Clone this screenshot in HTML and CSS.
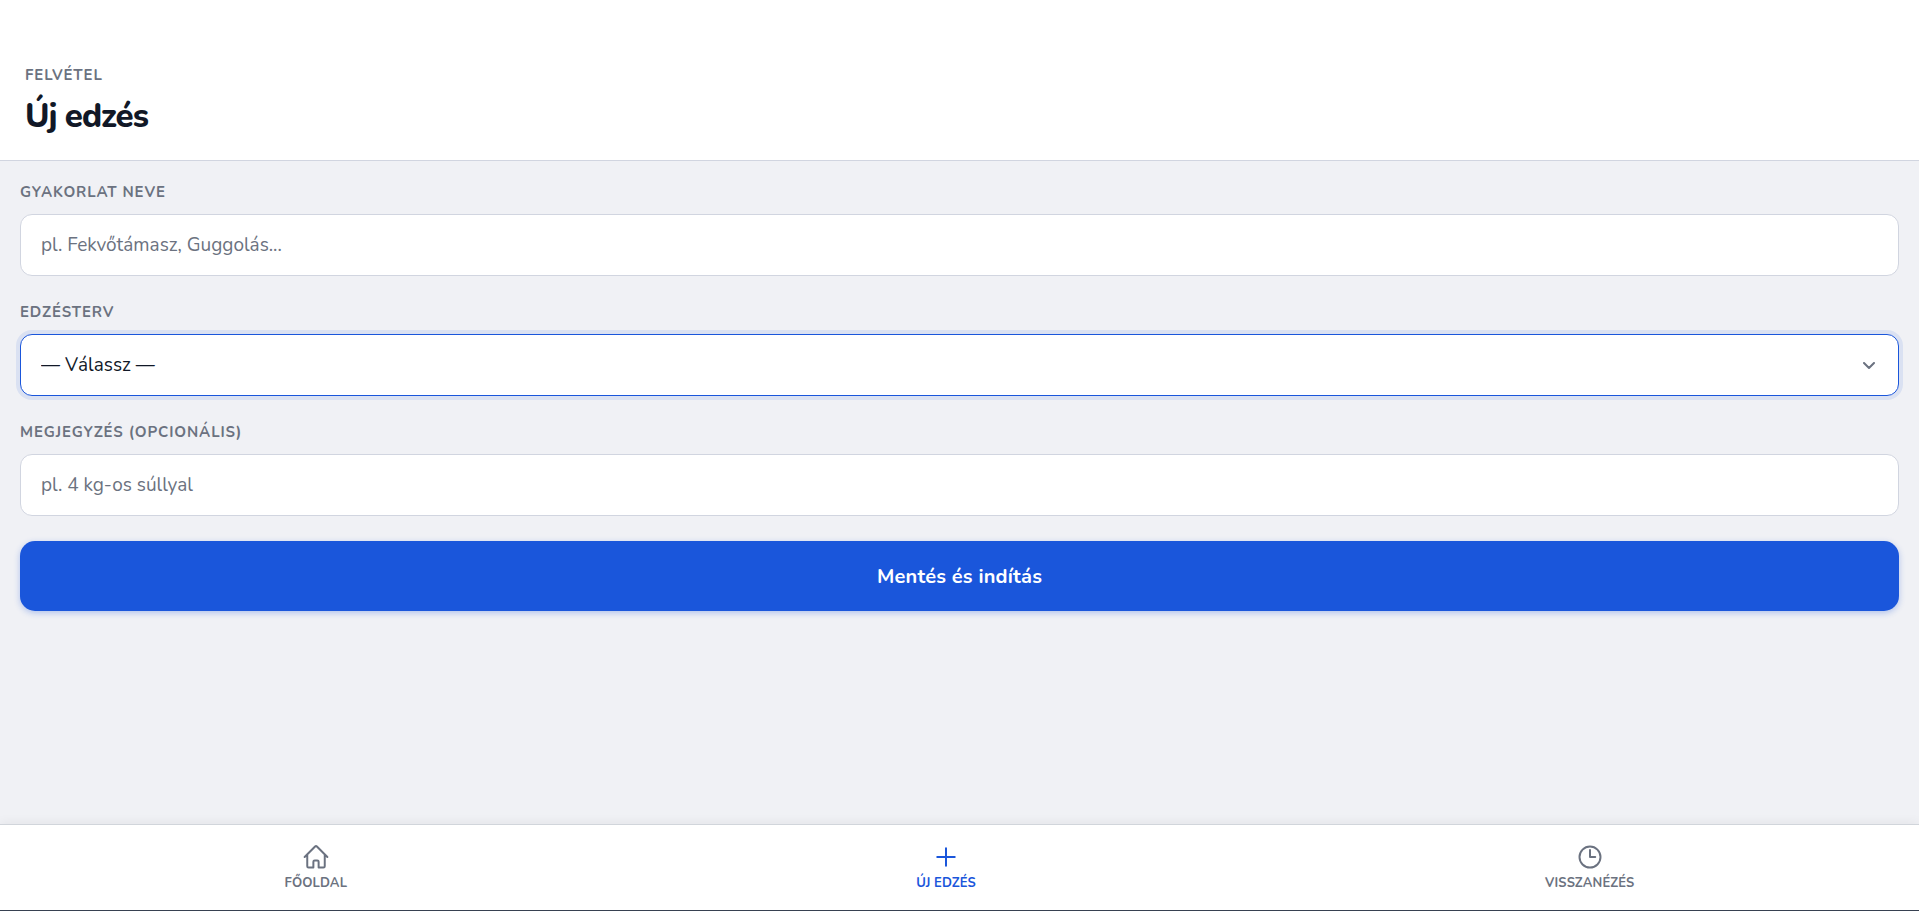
FILE: index.html
```html
<!DOCTYPE html>
<html lang="hu">
  <head>
    <meta charset="UTF-8" />
    <meta name="viewport" content="width=device-width, initial-scale=1.0" />
    <title>Új edzés</title>
    <link rel="stylesheet" href="styles.css" />
  </head>
  <body>
    <header class="page-header">
      <p class="eyebrow">Felvétel</p>
      <h1>Új edzés</h1>
    </header>

    <main class="content">
      <form class="form">
        <div class="field">
          <label for="exercise">Gyakorlat neve</label>
          <input type="text" id="exercise" name="exercise" placeholder="pl. Fekvőtámasz, Guggolás..." />
        </div>
        <div class="field">
          <label for="plan">Edzésterv</label>
          <div class="select-wrap active">
            <select id="plan" name="plan">
              <option value="">— Válassz —</option>
            </select>
            <svg class="chevron" viewBox="0 0 12 8"><path d="M1 1l5 5 5-5" /></svg>
          </div>
        </div>
        <div class="field">
          <label for="note">Megjegyzés (opcionális)</label>
          <input type="text" id="note" name="note" placeholder="pl. 4 kg-os súllyal" />
        </div>
        <button type="submit" class="btn">Mentés és indítás</button>
      </form>
    </main>

    <nav class="tabbar">
      <a href="#" class="tab">
        <svg viewBox="0 0 24 24"><path d="M2.25 12l8.954-8.955c.44-.439 1.152-.439 1.591 0L21.75 12M4.5 9.75v10.125c0 .621.504 1.125 1.125 1.125H9.75v-4.875c0-.621.504-1.125 1.125-1.125h2.25c.621 0 1.125.504 1.125 1.125V21h4.125c.621 0 1.125-.504 1.125-1.125V9.75" /></svg>
        <span>Főoldal</span>
      </a>
      <a href="#" class="tab active">
        <svg viewBox="0 0 24 24"><path d="M12 4.5v15m7.5-7.5h-15" /></svg>
        <span>Új edzés</span>
      </a>
      <a href="#" class="tab">
        <svg viewBox="0 0 24 24"><path d="M12 6v6h4.5m4.5 0a9 9 0 11-18 0 9 9 0 0118 0z" /></svg>
        <span>Visszanézés</span>
      </a>
    </nav>
  </body>
</html>
```
FILE: styles.css
```css
* {
  margin: 0;
  padding: 0;
  box-sizing: border-box;
}
body {
  min-height: 100vh;
  display: flex;
  flex-direction: column;
  background: #f0f1f5;
  color: #111827;
  font-family: Nunito, "Open Sans", sans-serif;
  font-size: 19px;
}
.page-header {
  padding: 64px 25px 23px;
  background: #fff;
  border-bottom: 1px solid #d1d5e0;
}
.eyebrow,
.field label {
  color: #6b7280;
  font-size: 15px;
  font-weight: 700;
  line-height: 22px;
  letter-spacing: 0.06em;
  text-transform: uppercase;
}
.page-header h1 {
  margin-top: 10px;
  font-size: 33px;
  font-weight: 800;
  line-height: 41px;
  letter-spacing: -0.03em;
}
.content {
  flex: 1;
  padding: 20px;
}
.form {
  display: flex;
  flex-direction: column;
  gap: 25px;
}
.field {
  display: flex;
  flex-direction: column;
  gap: 11px;
}
.field input,
.field select {
  width: 100%;
  height: 62px;
  padding: 0 20px;
  background: #fff;
  border: 1px solid #d1d5e0;
  border-radius: 12px;
  color: #111827;
  font-family: inherit;
  font-size: 19px;
  outline: none;
}
.field input::placeholder {
  color: #6b7280;
}
.field select {
  display: block;
  appearance: none;
}
.select-wrap {
  position: relative;
}
.field input:focus,
.select-wrap.active select {
  border-color: #1a56db;
  box-shadow: 0 0 0 4px rgba(26, 86, 219, 0.1);
}
.chevron {
  position: absolute;
  top: 28px;
  right: 24px;
  width: 12px;
  height: 8px;
  fill: none;
  stroke: #6b7280;
  stroke-width: 2;
  stroke-linecap: round;
  stroke-linejoin: round;
  pointer-events: none;
}
.btn {
  height: 70px;
  background: #1a56db;
  border: none;
  border-radius: 15px;
  box-shadow: 0 2px 6px rgba(26, 86, 219, 0.3);
  color: #fff;
  font-family: inherit;
  font-size: 20px;
  font-weight: 700;
  letter-spacing: 0.01em;
  cursor: pointer;
}
.tabbar {
  display: flex;
  justify-content: space-around;
  padding: 18px 0;
  background: #fff;
  border-top: 1px solid #d1d5db;
  border-bottom: 1px solid #374151;
  box-shadow: 0 -2px 10px rgba(0, 0, 0, 0.05);
}
.tab {
  display: flex;
  flex-direction: column;
  align-items: center;
  gap: 3px;
  color: #6b7280;
  font-size: 13px;
  font-weight: 700;
  line-height: 18px;
  letter-spacing: 0.01em;
  text-decoration: none;
  text-transform: uppercase;
}
.tab.active {
  color: #1a56db;
}
.tab svg {
  width: 28px;
  height: 28px;
  fill: none;
  stroke: currentColor;
  stroke-width: 1.7;
  stroke-linecap: round;
  stroke-linejoin: round;
}
```
